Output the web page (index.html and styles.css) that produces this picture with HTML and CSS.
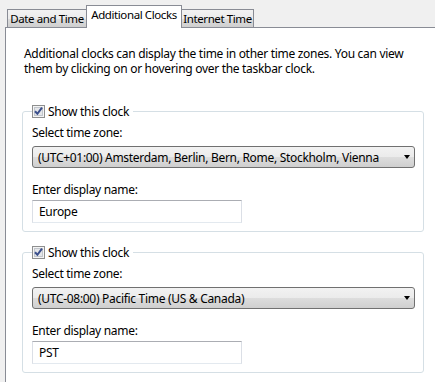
FILE: index.html
```html
<!DOCTYPE html>
<html lang="en">
<head>
    <meta charset="UTF-8">
    <title>Date and Time - Additional Clocks</title>
    <link rel="stylesheet" href="styles.css">
</head>
<body>
    <div class="tabs">
        <div class="tab tab-first">Date and Time</div>
        <div class="tab tab-active">Additional Clocks</div>
        <div class="tab tab-last">Internet Time</div>
    </div>
    <div class="panel">
        <p class="intro">Additional clocks can display the time in other time zones. You can view<br>them by clicking on or hovering over the taskbar clock.</p>

        <fieldset class="clock-group">
            <legend class="clock-toggle">
                <span class="checkbox">
                    <svg width="13" height="13" viewBox="0 0 13 13">
                        <rect x="0.5" y="0.5" width="12" height="12" fill="#f4f4f4" stroke="#8e8f8f"/>
                        <rect x="2.5" y="2.5" width="8" height="8" fill="#e4e6e9" stroke="#c2c6cc"/>
                        <path d="M3 6.2 L5.4 8.8 L10 2.6" fill="none" stroke="#3b4f8c" stroke-width="2"/>
                    </svg>
                </span>
                Show this clock
            </legend>
            <div class="field-label">Select time zone:</div>
            <div class="dropdown">
                <span>(UTC+01:00) Amsterdam, Berlin, Bern, Rome, Stockholm, Vienna</span>
                <span class="arrow"></span>
            </div>
            <div class="field-label spaced">Enter display name:</div>
            <div class="textbox">Europe</div>
        </fieldset>

        <fieldset class="clock-group second">
            <legend class="clock-toggle">
                <span class="checkbox">
                    <svg width="13" height="13" viewBox="0 0 13 13">
                        <rect x="0.5" y="0.5" width="12" height="12" fill="#f4f4f4" stroke="#8e8f8f"/>
                        <rect x="2.5" y="2.5" width="8" height="8" fill="#e4e6e9" stroke="#c2c6cc"/>
                        <path d="M3 6.2 L5.4 8.8 L10 2.6" fill="none" stroke="#3b4f8c" stroke-width="2"/>
                    </svg>
                </span>
                Show this clock
            </legend>
            <div class="field-label">Select time zone:</div>
            <div class="dropdown">
                <span>(UTC-08:00) Pacific Time (US &amp; Canada)</span>
                <span class="arrow"></span>
            </div>
            <div class="field-label spaced">Enter display name:</div>
            <div class="textbox">PST</div>
        </fieldset>
    </div>
</body>
</html>
```

FILE: styles.css
```css
body {
    margin: 0;
    width: 435px;
    height: 382px;
    overflow: hidden;
    display: flex;
    flex-direction: column;
    background-color: #f0f0f0;
    font-family: 'Noto Sans', 'Open Sans', sans-serif;
    font-size: 12px;
    line-height: 15px;
    letter-spacing: -0.3px;
    color: #000;
}
.tabs {
    display: flex;
    align-items: flex-end;
    height: 22px;
    padding: 5px 0 0 7px;
}
.tab {
    box-sizing: border-box;
    height: 18px;
    padding: 0;
    border: 1px solid #898c95;
    border-bottom: none;
    background: linear-gradient(#f2f2f2 0%, #ebebeb 50%, #dddddd 51%, #cfcfcf 100%);
    font-size: 11.5px;
    letter-spacing: -0.4px;
    line-height: 17px;
    text-align: center;
    white-space: nowrap;
}
.tab-first {
    width: 80px;
}
.tab-last {
    width: 73px;
}
.tab + .tab {
    margin-left: -1px;
}
.tab-active {
    position: relative;
    z-index: 1;
    width: 96px;
    height: 23px;
    margin-bottom: -1px;
    background: #fff;
    line-height: 18px;
}
.panel {
    flex: 1;
    margin-left: 5px;
    border: 1px solid #898c95;
    border-right: none;
    border-bottom: none;
    background-color: #fff;
}
.intro {
    margin: 18px 0 0 18px;
    white-space: nowrap;
}
.clock-group {
    box-sizing: border-box;
    width: 402px;
    margin: 28px 0 0 16px;
    padding: 0 8px 8px 9px;
    border: 1px solid #d5dfe5;
    border-radius: 3px;
}
.clock-group.second {
    margin-top: 13px;
}
.clock-toggle {
    display: flex;
    align-items: center;
    padding: 0 4px 0 0;
}
.checkbox {
    display: flex;
    width: 13px;
    height: 13px;
    margin-right: 3px;
}
.field-label {
    margin-top: 6px;
}
.field-label.spaced {
    margin-top: 14px;
}
.dropdown {
    display: flex;
    align-items: center;
    justify-content: space-between;
    height: 20px;
    margin-top: 6px;
    padding: 0 4px 0 5px;
    border: 1px solid #707070;
    border-radius: 3px;
    background: linear-gradient(#f2f2f2 0%, #ebebeb 50%, #dddddd 51%, #cfcfcf 100%);
    white-space: nowrap;
}
.arrow {
    width: 0;
    height: 0;
    border-left: 3.5px solid transparent;
    border-right: 3.5px solid transparent;
    border-top: 4px solid #000;
}
.textbox {
    box-sizing: border-box;
    width: 210px;
    height: 23px;
    margin-top: 3px;
    padding: 3px 0 0 6px;
    border: 1px solid #dbdfe6;
    border-top-color: #abadb3;
    border-bottom-color: #e3e9ef;
}
```
